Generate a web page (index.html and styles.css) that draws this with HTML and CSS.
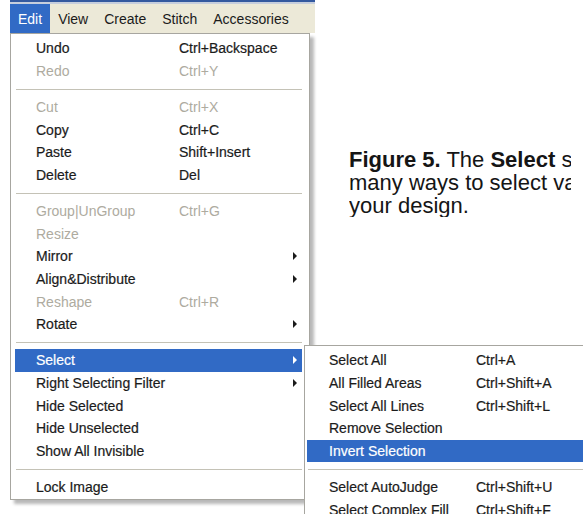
FILE: index.html
```html
<!DOCTYPE html>
<html lang="en">
<head>
<meta charset="utf-8">
<title>Edit menu – Select submenu</title>
<link rel="stylesheet" href="styles.css">
</head>
<body>
<div class="page">
  <div class="app">
    <nav class="menubar">
      <span class="menubar-item is-open">Edit</span>
      <span class="menubar-item">View</span>
      <span class="menubar-item">Create</span>
      <span class="menubar-item">Stitch</span>
      <span class="menubar-item">Accessories</span>
    </nav>
    <ul class="menu dropdown">
      <li class="item"><span class="label">Undo</span><span class="key">Ctrl+Backspace</span></li>
      <li class="item is-disabled"><span class="label">Redo</span><span class="key">Ctrl+Y</span></li>
      <li class="sep"></li>
      <li class="item is-disabled"><span class="label">Cut</span><span class="key">Ctrl+X</span></li>
      <li class="item"><span class="label">Copy</span><span class="key">Ctrl+C</span></li>
      <li class="item"><span class="label">Paste</span><span class="key">Shift+Insert</span></li>
      <li class="item"><span class="label">Delete</span><span class="key">Del</span></li>
      <li class="sep"></li>
      <li class="item is-disabled"><span class="label">Group|UnGroup</span><span class="key">Ctrl+G</span></li>
      <li class="item is-disabled"><span class="label">Resize</span></li>
      <li class="item"><span class="label">Mirror</span><span class="key"></span><span class="arrow"></span></li>
      <li class="item"><span class="label">Align&amp;Distribute</span><span class="key"></span><span class="arrow"></span></li>
      <li class="item is-disabled"><span class="label">Reshape</span><span class="key">Ctrl+R</span></li>
      <li class="item"><span class="label">Rotate</span><span class="key"></span><span class="arrow"></span></li>
      <li class="sep"></li>
      <li class="item is-active"><span class="label">Select</span><span class="key"></span><span class="arrow"></span>
        <ul class="menu submenu">
          <li class="item"><span class="label">Select All</span><span class="key">Ctrl+A</span></li>
          <li class="item"><span class="label">All Filled Areas</span><span class="key">Ctrl+Shift+A</span></li>
          <li class="item"><span class="label">Select All Lines</span><span class="key">Ctrl+Shift+L</span></li>
          <li class="item"><span class="label">Remove Selection</span></li>
          <li class="item is-active"><span class="label">Invert Selection</span></li>
          <li class="sep"></li>
          <li class="item"><span class="label">Select AutoJudge</span><span class="key">Ctrl+Shift+U</span></li>
          <li class="item"><span class="label">Select Complex Fill</span><span class="key">Ctrl+Shift+F</span></li>
        </ul>
      </li>
      <li class="item"><span class="label">Right Selecting Filter</span><span class="key"></span><span class="arrow"></span></li>
      <li class="item"><span class="label">Hide Selected</span></li>
      <li class="item"><span class="label">Hide Unselected</span></li>
      <li class="item"><span class="label">Show All Invisible</span></li>
      <li class="sep"></li>
      <li class="item"><span class="label">Lock Image</span></li>
    </ul>
  </div>
  <p class="caption"><b>Figure 5.</b> The <b>Select</b> submenu offers<br>many ways to select various parts of<br>your design.</p>
</div>
</body>
</html>
```

FILE: styles.css
```css
* {
  box-sizing: border-box;
  margin: 0;
  padding: 0;
}

html,
body {
  width: 583px;
  height: 514px;
  overflow: hidden;
  background: #fff;
}

body {
  font-family: "Liberation Sans", Arial, sans-serif;
  color: #1b1b1b;
}

.page {
  display: flex;
  align-items: flex-start;
}

/* application window: menu bar with the open Edit menu */
.app {
  flex: none;
  width: 305px;
  margin-left: 10px;
}

.menubar {
  display: flex;
  height: 33px;
  border-top: 2px solid #34599f;
  padding-top: 2px;
  background: linear-gradient(#c6cedd 0 2px, #ece9d8 2px);
  font-size: 14px;
}

.menubar-item {
  display: flex;
  align-items: center;
  padding: 0 8px;
  white-space: nowrap;
}

.menubar-item.is-open {
  background: #316ac5;
  color: #fff;
}

/* drop-down menus */
.menu {
  list-style: none;
  background: #fff;
  border: 1px solid #a7a6a0;
  font-size: 14px;
}

.dropdown {
  width: 300px;
  padding: 3px 7px 1px 4px;
  box-shadow: 4px 4px 3px rgba(0, 0, 0, 0.28);
}

.item {
  position: relative;
  display: grid;
  grid-template-columns: 143px 1fr 10px;
  align-items: center;
  height: 22.6px;
  padding-left: 21px;
  white-space: nowrap;
  color: #1b1b1b;
  -webkit-text-stroke: 0.2px currentColor;
}

.item.is-disabled {
  color: #aeab9f;
  -webkit-text-stroke: 0;
}

.item.is-active {
  background: #316ac5;
  color: #fff;
}

.sep {
  display: flex;
  align-items: center;
  height: 13.7px;
}

.sep::before {
  content: "";
  flex: 1;
  height: 1px;
  margin-left: 1px;
  background: #c4c2b6;
}

/* sub-menu arrow */
.arrow {
  width: 0;
  height: 0;
  margin-left: 1px;
  border-left: 4px solid currentColor;
  border-top: 4px solid transparent;
  border-bottom: 4px solid transparent;
}

/* cascading Select sub-menu, opened beside its parent row */
.submenu {
  position: absolute;
  left: calc(100% + 2px);
  top: -4px;
  width: 290px;
  padding: 3px 2px;
  box-shadow: 4px 4px 3px rgba(0, 0, 0, 0.28);
}

.submenu .item {
  grid-template-columns: 147px 1fr;
  padding-left: 22px;
}

.caption {
  flex: none;
  width: 222px;
  margin: 148px 0 0 34px;
  overflow: hidden;
  font-size: 22px;
  line-height: 23px;
  white-space: nowrap;
  color: #151515;
}
```
